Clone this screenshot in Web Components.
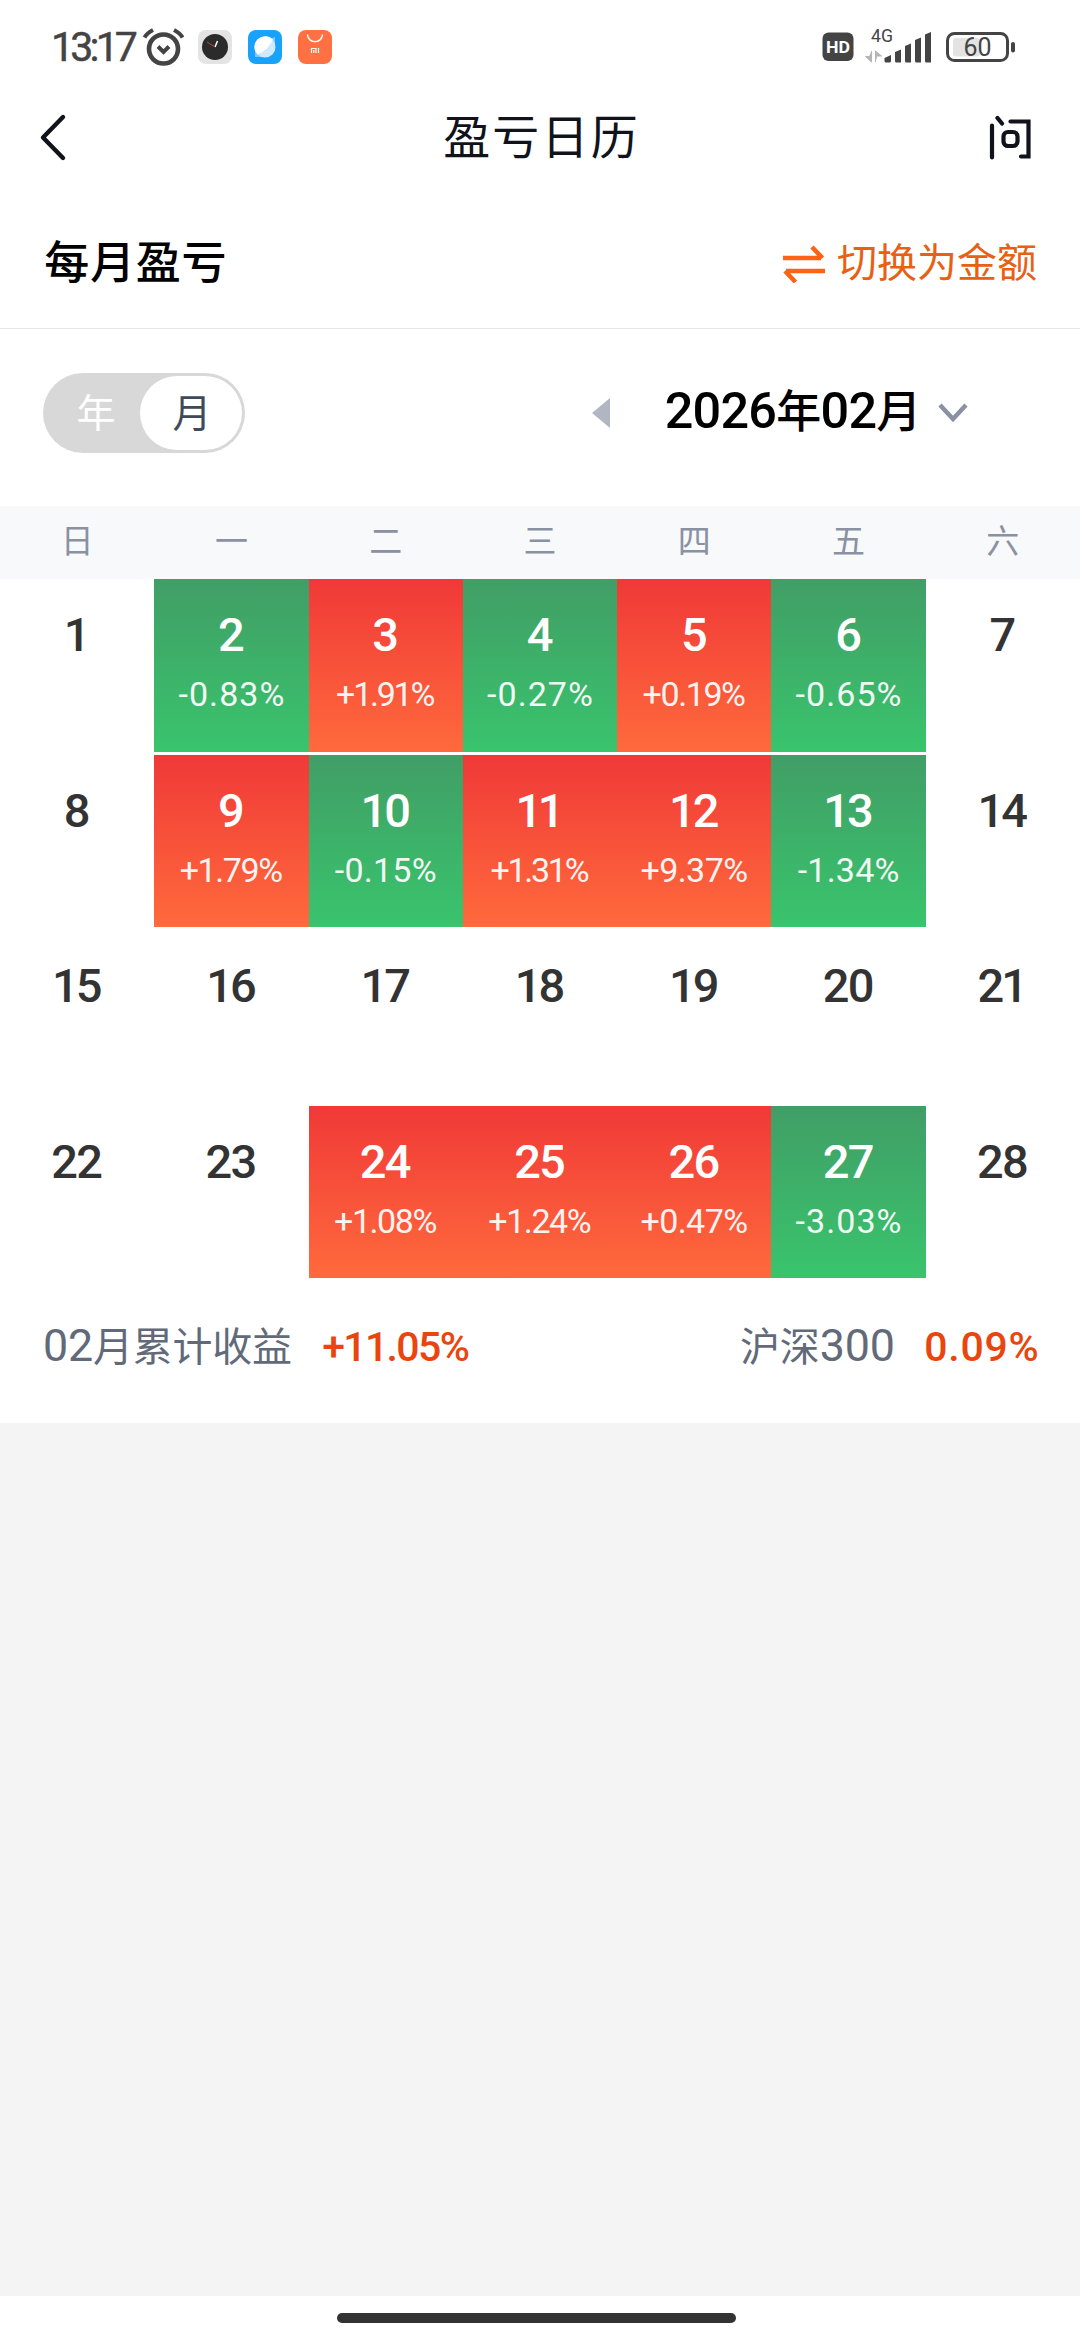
<!DOCTYPE html>
<html lang="zh-CN">
<head>
<meta charset="utf-8">
<title>盈亏日历</title>
<style>
html, body { margin: 0; height: 100%; }
body {
  font-family: Roboto, "Noto Sans CJK SC", sans-serif;
  background: #f4f4f4;
}
/* digits stand taller than the characters next to them */
b { font-size: 1.12em; font-weight: inherit; line-height: 1; }
</style>
<script>
// one line of text, tracked so that it fills the width in its attribute
class FitText extends HTMLElement {
  constructor() {
    super();
    this.attachShadow({mode: 'open'}).innerHTML = `
<style>
:host { display: inline-block; white-space: nowrap; line-height: 1; flex: none; }
span { display: inline-block; }
</style>
<span><slot></slot></span>`;
  }
  connectedCallback() {
    const width = +this.getAttribute('width');
    const span = this.shadowRoot.querySelector('span');
    const nodes = this.shadowRoot.querySelector('slot').assignedNodes({flatten: true});
    const text = nodes.map((node) => node.textContent).join('').trim();
    const natural = span.getBoundingClientRect().width;
    const gap = (width - natural) / text.length;
    span.style.letterSpacing = gap + 'px';
    span.style.marginRight = -gap / 2 + 'px';
    span.style.marginLeft = gap / 2 + 'px';
  }
}

class StatusBar extends HTMLElement {
  constructor() {
    super();
    this.attachShadow({mode: 'open'}).innerHTML = `
<style>
:host { display: flex; height: 94px; box-sizing: border-box; padding: 0 64px 0 53px; align-items: center; color: #444; }
svg { display: block; flex: none; }
.time { font-size: 41px; margin-top: 1px; -webkit-text-stroke: .5px #444; }
.grow { flex: 1; }
</style>
<fit-text class="time" width="83">13:17</fit-text>
<svg width="42" height="40" viewBox="0 0 42 40" style="margin-left:6px" fill="none" stroke="#444" stroke-width="4.6">
  <circle cx="21.500" cy="22" r="14.500"/>
  <path d="M2.500 10.500Q5 6 11 3M40.500 10.500Q38 6 32 3" stroke-width="4"/>
  <path d="M16 19.500L21.500 25L27 19.500" stroke-width="4"/>
</svg>
<svg width="34" height="34" viewBox="0 0 34 34" style="margin-left:14px">
  <rect width="34" height="34" rx="8" fill="#e4e4e4"/>
  <circle cx="17" cy="17" r="13" fill="#2b2b2b"/>
  <path d="M17 17L19.500 11" stroke="#fff" stroke-width="1.500"/>
  <path d="M9 12L17 17" stroke="#c0453c" stroke-width="1"/>
</svg>
<svg width="34" height="34" viewBox="0 0 34 34" style="margin-left:16px">
  <rect width="34" height="34" rx="8" fill="#18a2fc"/>
  <path d="M27 7V19A11 11 0 0 1 18 27H7V15Z" fill="#7cc9fd"/>
  <circle cx="17" cy="17" r="10.500" fill="#cfeafe"/>
  <path d="M9.500 24.500A10.500 10.500 0 1 1 25 9.500Q20 20 9.500 24.500Z" fill="#fff"/>
</svg>
<svg width="34" height="34" viewBox="0 0 34 34" style="margin-left:16px">
  <rect width="34" height="34" rx="8" fill="#ff7043"/>
  <path d="M9.500 4.500C10 14 24 14 24.500 4.500" fill="none" stroke="#fff" stroke-width="1.400"/>
  <path d="M13.500 23V18.500H18V23M15.800 20V23M20.500 18V23" fill="none" stroke="#fff" stroke-width="1.200"/>
</svg>
<div class="grow"></div>
<svg width="194" height="64" viewBox="822 15 194 64" font-family="Roboto, sans-serif">
  <rect x="822.500" y="32.500" width="31" height="28.500" rx="6" fill="#444"/>
  <text x="838" y="53" font-size="17" font-weight="700" fill="#fff" text-anchor="middle" textLength="24" lengthAdjust="spacingAndGlyphs">HD</text>
  <text x="871" y="42" font-size="17.500" fill="#444" textLength="22" lengthAdjust="spacingAndGlyphs">4G</text>
  <path d="M871.500 51V62L865.500 56.500H869M875.500 62V51L881.500 56H877.500" fill="#b5b5b5" stroke="#b5b5b5" stroke-width="1"/>
  <path d="M884.500 58L891 55V61Q891 62.500 889.500 62.500H886Q884.500 62.500 884.500 61ZM895 52L901 49.500V62.500H896.500Q895 62.500 895 61ZM905 46L911 43.500V62.500H906.500Q905 62.500 905 61ZM915 40L921 37.500V62.500H916.500Q915 62.500 915 61ZM925 34.500L931 32V62.500H926.500Q925 62.500 925 61Z" fill="#444"/>
  <rect x="953" y="38" width="27" height="18.500" rx="3" fill="#e3e3e3"/>
  <rect x="947.500" y="33.500" width="60" height="27" rx="7" fill="none" stroke="#444" stroke-width="3"/>
  <rect x="1011" y="42" width="4" height="10.500" rx="2" fill="#444"/>
  <text x="977.500" y="56" font-size="25" fill="#444" text-anchor="middle" textLength="28" lengthAdjust="spacingAndGlyphs">60</text>
</svg>`;
  }
}

class NavBar extends HTMLElement {
  constructor() {
    super();
    this.attachShadow({mode: 'open'}).innerHTML = `
<style>
:host { display: grid; grid-template-columns: 1fr auto 1fr; height: 86px; align-items: center; padding: 0 47px 0 38px; color: #10131b; font-size: 47px; }
svg { display: block; }
fit-text { padding: 0 0 0 10px; }
.ask { justify-self: end; }
</style>
<svg width="30" height="50" viewBox="0 0 30 50" fill="none" stroke="#10131b" stroke-width="4.400" stroke-linecap="round" stroke-linejoin="round"><path d="M25 5L5 25.500L25 46"/></svg>
<fit-text width="197"><slot></slot></fit-text>
<svg class="ask" width="44" height="46" viewBox="0 0 44 46" fill="none" stroke="#10131b" stroke-width="4.200" stroke-linecap="round">
  <path d="M3 11.500V43.500M8.500 4L13 9.500M21.500 7.500H39.500V42.500H32"/>
  <rect x="14.500" y="18" width="14" height="14" rx="4.500"/>
</svg>`;
  }
}

class SectionHead extends HTMLElement {
  constructor() {
    super();
    this.attachShadow({mode: 'open'}).innerHTML = `
<style>
:host { display: flex; justify-content: space-between; align-items: center; height: 148px; padding: 0 43px 0 44px; border-bottom: 1px solid #e6e6e6; }
.title { font-size: 45px; font-weight: 500; color: #000; margin-top: 19px; }
.switch { display: flex; align-items: center; gap: 12px; font-size: 40px; color: #e86012; margin-top: 19px; }
</style>
<fit-text class="title" width="183"><slot name="title"></slot></fit-text>
<div class="switch">
  <svg width="42" height="38" viewBox="0 0 42 38" fill="none" stroke="#fa6414" stroke-width="4.500"><path d="M0 13H38M29 2L39.500 13M42 26H3M12.500 37L2 26"/></svg>
  <fit-text width="200"><slot name="action"></slot></fit-text>
</div>`;
  }
}

class PeriodToggle extends HTMLElement {
  constructor() {
    super();
    this.attachShadow({mode: 'open'}).innerHTML = `
<style>
:host { display: flex; box-sizing: border-box; width: 202px; height: 80px; padding: 3px; border-radius: 40px; background: #d8d8d8; font-size: 39px; line-height: 76px; text-align: center; }
.off { flex: 1; color: #fff; padding-left: 6px; }
.on { box-sizing: border-box; width: 102px; padding-left: 2px; border-radius: 37px; background: #fff; color: #404a58; }
</style>
<div class="off"><slot name="off"></slot></div>
<div class="on"><slot name="on"></slot></div>`;
  }
}

class MonthPicker extends HTMLElement {
  constructor() {
    super();
    this.attachShadow({mode: 'open'}).innerHTML = `
<style>
:host { display: flex; align-items: center; color: #000; font-size: 45px; font-weight: 500; }
fit-text { margin: 0 17px 0 55px; padding-bottom: 4px; }
svg { display: block; }
</style>
<svg width="18" height="30" viewBox="0 0 18 30"><path d="M0 15L18 0V30Z" fill="#b0b6c2"/></svg>
<fit-text width="256"><slot></slot></fit-text>
<svg width="30" height="20" viewBox="0 0 30 20" fill="none" stroke="#8a91a2" stroke-width="4.500"><path d="M2 2L15 16L28 2"/></svg>`;
  }
}

class DayCell extends HTMLElement {
  constructor() {
    super();
    this.attachShadow({mode: 'open'}).innerHTML = `
<style>
:host { display: flex; flex-direction: column; align-items: center; color: #333; line-height: 1; }
:host([kind=gain]) { color: #fff; background: linear-gradient(#f03938, #ff6a3c); }
:host([kind=loss]) { color: #fff; background: linear-gradient(#419e66, #39c46d); }
.day { font-size: 47px; font-weight: 500; margin-top: 32px; }
.rate { font-size: 34px; margin-top: 19px; opacity: .93; }
</style>`;
  }
  connectedCallback() {
    const day = this.getAttribute('day');
    const rate = this.getAttribute('rate');
    // a 1 is narrower than the other digits
    const ones = (text) => text.split('1').length - 1;
    const dayWidth = day.length * 25 - (day.length > 1 ? ones(day) * 2.500 : 0);
    let html = `<fit-text class="day" width="${dayWidth}">${day}</fit-text>`;
    if (rate) {
      this.setAttribute('kind', rate[0] === '+' ? 'gain' : 'loss');
      html += `<fit-text class="rate" width="${107 - ones(rate) * 5}">${rate}</fit-text>`;
    }
    this.shadowRoot.innerHTML += html;
  }
}

class ProfitCalendar extends HTMLElement {
  constructor() {
    super();
    this.attachShadow({mode: 'open'}).innerHTML = `
<style>
:host { display: block; }
.week, .days { display: grid; grid-template-columns: repeat(7, 1fr); }
.week { height: 73px; background: #f8f9fb; color: #8a91a2; font-size: 33px; line-height: 71px; text-align: center; }
.days { grid-auto-rows: 172.600px; row-gap: 3px; }
</style>
<div class="week"></div>
<div class="days"></div>`;
  }
  connectedCallback() {
    const rates = {
      2: '-0.83%', 3: '+1.91%', 4: '-0.27%', 5: '+0.19%', 6: '-0.65%',
      9: '+1.79%', 10: '-0.15%', 11: '+1.31%', 12: '+9.37%', 13: '-1.34%',
      24: '+1.08%', 25: '+1.24%', 26: '+0.47%', 27: '-3.03%',
    };
    const week = this.shadowRoot.querySelector('.week');
    const days = this.shadowRoot.querySelector('.days');
    week.innerHTML = [...'日一二三四五六'].map((d) => `<span>${d}</span>`).join('');
    let html = '';
    for (let d = 1; d <= 28; d++) {
      html += `<day-cell day="${d}" rate="${rates[d] || ''}"></day-cell>`;
    }
    days.innerHTML = html;
  }
}

class SummaryRow extends HTMLElement {
  constructor() {
    super();
    this.attachShadow({mode: 'open'}).innerHTML = `
<style>
:host { display: flex; align-items: center; height: 137px; padding: 0 41px 7px 43px; font-size: 40px; color: #626a7a; }
.num { color: #e8460e; font-weight: 500; font-size: 41px; padding-top: 2px; }
.gap { flex: 1; }
</style>
<fit-text width="249"><slot name="label"></slot></fit-text>
<fit-text class="num" width="146" style="margin-left:31px"><slot name="total"></slot></fit-text>
<div class="gap"></div>
<fit-text width="155"><slot name="index"></slot></fit-text>
<fit-text class="num" width="115" style="margin-left:29px"><slot name="rate"></slot></fit-text>`;
  }
}

class AppScreen extends HTMLElement {
  constructor() {
    super();
    this.attachShadow({mode: 'open'}).innerHTML = `
<style>
:host { display: flex; flex-direction: column; height: 2340px; width: 1080px; background: #f4f4f4; }
.panel { background: #fff; height: 1423px; }
.home { margin-top: auto; height: 44px; background: #fff; display: flex; justify-content: center; align-items: center; }
.home div { width: 399px; height: 10px; border-radius: 5px; background: #333; margin: 0 7px 0 0; }
</style>
<div class="panel"><slot></slot></div>
<div class="home"><div></div></div>`;
  }
}

class ToolRow extends HTMLElement {
  constructor() {
    super();
    this.attachShadow({mode: 'open'}).innerHTML = `
<style>
:host { display: flex; justify-content: space-between; align-items: center; height: 177px; box-sizing: border-box; padding: 0 112px 9px 43px; }
</style>
<slot></slot>`;
  }
}

addEventListener('DOMContentLoaded', () => {
  customElements.define('app-screen', AppScreen);
  customElements.define('status-bar', StatusBar);
  customElements.define('nav-bar', NavBar);
  customElements.define('section-head', SectionHead);
  customElements.define('tool-row', ToolRow);
  customElements.define('period-toggle', PeriodToggle);
  customElements.define('month-picker', MonthPicker);
  customElements.define('profit-calendar', ProfitCalendar);
  customElements.define('day-cell', DayCell);
  customElements.define('summary-row', SummaryRow);
  // last, so that every text is already in place when it is measured
  customElements.define('fit-text', FitText);
});
</script>
</head>
<body>
<app-screen>
  <status-bar></status-bar>
  <nav-bar>盈亏日历</nav-bar>
  <section-head>
    <span slot="title">每月盈亏</span>
    <span slot="action">切换为金额</span>
  </section-head>
  <tool-row>
    <period-toggle><span slot="off">年</span><span slot="on">月</span></period-toggle>
    <month-picker><b>2026</b>年<b>02</b>月</month-picker>
  </tool-row>
  <profit-calendar></profit-calendar>
  <summary-row>
    <span slot="label"><b>02</b>月累计收益</span>
    <span slot="total">+11.05%</span>
    <span slot="index">沪深<b>300</b></span>
    <span slot="rate">0.09%</span>
  </summary-row>
</app-screen>
</body>
</html>
